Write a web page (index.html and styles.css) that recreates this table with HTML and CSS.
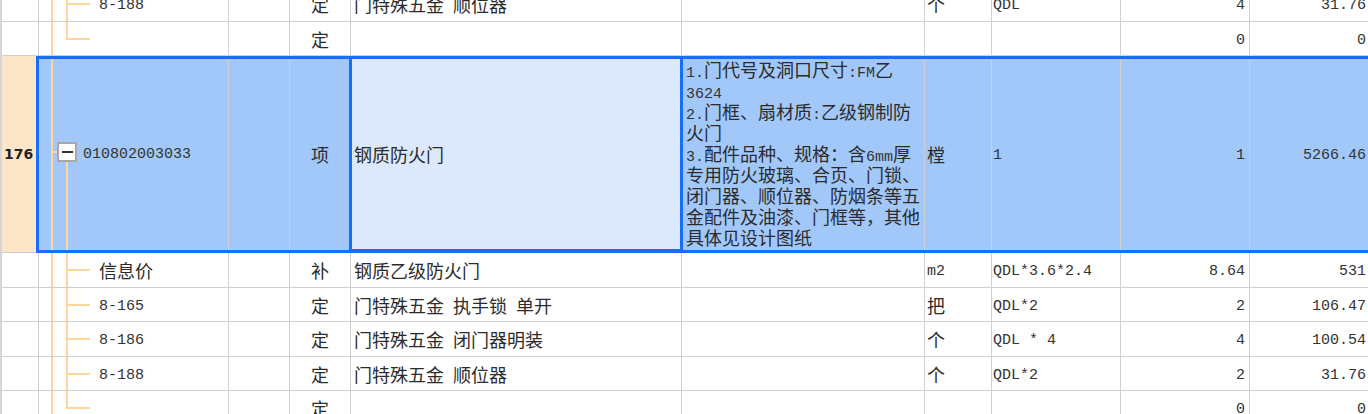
FILE: index.html
```html
<!DOCTYPE html>
<html lang="zh">
<head>
<meta charset="utf-8">
<title>清单</title>
<link rel="stylesheet" href="styles.css">
</head>
<body>
<div class="grid">
  <div class="row r35">
    <div class="c rn"></div>
    <div class="c ca"><span class="guide"></span><span class="elbow"><i class="up"></i><i class="down"></i></span><span class="code m">8-188</span></div>
    <div class="c"></div>
    <div class="c ctr">定</div>
    <div class="c name"><span>门特殊五金<span class="m">&nbsp;</span>顺位器</span></div>
    <div class="c"></div>
    <div class="c unit">个</div>
    <div class="c expr m">QDL</div>
    <div class="c num m">4</div>
    <div class="c num last m">31.76</div>
  </div>
  <div class="row r34">
    <div class="c rn"></div>
    <div class="c ca"><span class="guide"></span><span class="elbow end"><i class="up"></i><i class="down"></i></span></div>
    <div class="c"></div>
    <div class="c ctr">定</div>
    <div class="c name"></div>
    <div class="c"></div>
    <div class="c unit"></div>
    <div class="c expr"></div>
    <div class="c num m">0</div>
    <div class="c num last m">0</div>
  </div>
  <div class="row sel">
    <div class="c rn rnsel">176</div>
    <div class="c ca"><span class="guide"></span><span class="tick"></span><span class="node"><i class="ntop"></i><span class="box"><i class="minus"></i></span><i class="nbot"></i></span><span class="code2 m">010802003033</span></div>
    <div class="c"></div>
    <div class="c ctr">项</div>
    <div class="c name focus">钢质防火门</div>
    <div class="c desc">
      <div class="ln"><span class="m">1.</span>门代号及洞口尺寸<span class="m">:FM</span>乙</div>
      <div class="ln"><span class="m">3624</span></div>
      <div class="ln"><span class="m">2.</span>门框、扇材质<span class="m">:</span>乙级钢制防</div>
      <div class="ln">火门</div>
      <div class="ln"><span class="m">3.</span>配件品种、规格：含<span class="m">6mm</span>厚</div>
      <div class="ln">专用防火玻璃、合页、门锁、</div>
      <div class="ln">闭门器、顺位器、防烟条等五</div>
      <div class="ln">金配件及油漆、门框等，其他</div>
      <div class="ln">具体见设计图纸</div>
    </div>
    <div class="c unit">樘</div>
    <div class="c expr m">1</div>
    <div class="c num m">1</div>
    <div class="c num last m">5266.46</div>
  </div>
  <div class="row r35">
    <div class="c rn"></div>
    <div class="c ca"><span class="guide"></span><span class="elbow"><i class="up"></i><i class="down"></i></span><span class="code">信息价</span></div>
    <div class="c"></div>
    <div class="c ctr">补</div>
    <div class="c name">钢质乙级防火门</div>
    <div class="c"></div>
    <div class="c unit m">m2</div>
    <div class="c expr m">QDL*3.6*2.4</div>
    <div class="c num m">8.64</div>
    <div class="c num last m">531</div>
  </div>
  <div class="row r34">
    <div class="c rn"></div>
    <div class="c ca"><span class="guide"></span><span class="elbow"><i class="up"></i><i class="down"></i></span><span class="code m">8-165</span></div>
    <div class="c"></div>
    <div class="c ctr">定</div>
    <div class="c name"><span>门特殊五金<span class="m">&nbsp;</span>执手锁<span class="m">&nbsp;</span>单开</span></div>
    <div class="c"></div>
    <div class="c unit">把</div>
    <div class="c expr m">QDL*2</div>
    <div class="c num m">2</div>
    <div class="c num last m">106.47</div>
  </div>
  <div class="row r35">
    <div class="c rn"></div>
    <div class="c ca"><span class="guide"></span><span class="elbow"><i class="up"></i><i class="down"></i></span><span class="code m">8-186</span></div>
    <div class="c"></div>
    <div class="c ctr">定</div>
    <div class="c name"><span>门特殊五金<span class="m">&nbsp;</span>闭门器明装</span></div>
    <div class="c"></div>
    <div class="c unit">个</div>
    <div class="c expr m">QDL&nbsp;*&nbsp;4</div>
    <div class="c num m">4</div>
    <div class="c num last m">100.54</div>
  </div>
  <div class="row r34">
    <div class="c rn"></div>
    <div class="c ca"><span class="guide"></span><span class="elbow"><i class="up"></i><i class="down"></i></span><span class="code m">8-188</span></div>
    <div class="c"></div>
    <div class="c ctr">定</div>
    <div class="c name"><span>门特殊五金<span class="m">&nbsp;</span>顺位器</span></div>
    <div class="c"></div>
    <div class="c unit">个</div>
    <div class="c expr m">QDL*2</div>
    <div class="c num m">2</div>
    <div class="c num last m">31.76</div>
  </div>
  <div class="row r35">
    <div class="c rn"></div>
    <div class="c ca"><span class="guide"></span><span class="elbow end"><i class="up"></i><i class="down"></i></span></div>
    <div class="c"></div>
    <div class="c ctr">定</div>
    <div class="c name"></div>
    <div class="c"></div>
    <div class="c unit"></div>
    <div class="c expr"></div>
    <div class="c num m">0</div>
    <div class="c num last m">0</div>
  </div>
</div>
</body>
</html>
```

FILE: styles.css
```css
html, body {
  margin: 0;
  padding: 0;
  background: #ffffff;
}

body {
  overflow: hidden;
  width: 1368px;
  height: 414px;
  font-family: "Noto Sans CJK SC", sans-serif;
  font-size: 18px;
  color: #2b2b2b;
}

.grid {
  margin-top: -13px;
  display: flex;
  flex-direction: column;
}

.row {
  display: grid;
  grid-template-columns: 39px 190px 61px 61px 331px 243px 67px 129px 129px 119px;
  position: relative;
  overflow: visible;
}

.r34 { height: 34px; grid-template-rows: 34px; }
.r35 { height: 35px; grid-template-rows: 35px; }
.sel { height: 197px; grid-template-rows: 197px; }

.c {
  box-sizing: border-box;
  border-right: 1px solid #cfcfcf;
  border-bottom: 1px solid #cfcfcf;
  display: flex;
  align-items: center;
  white-space: nowrap;
  min-width: 0;
  min-height: 0;
}

.m {
  font-family: "Liberation Mono", monospace;
  font-size: 15px;
  color: #333333;
}

.c.m {
  padding-top: 3px;
}

.rn {
  border-left: 2px solid #d6d6d6;
}

.rnsel {
  background: #fde5c7;
  font-family: "DejaVu Sans", sans-serif;
  font-weight: bold;
  font-size: 14px;
  color: #222222;
  padding-left: 2px;
}

.ctr { justify-content: center; }

.name { padding-left: 3px; }

.unit { padding-left: 2px; }

.expr { padding-left: 1px; }

.num {
  justify-content: flex-end;
  padding-right: 4px;
}

.last {
  border-right: none;
  padding-right: 3px;
}

/* tree column */
.ca {
  align-items: stretch;
}

.guide {
  margin-left: 12px;
  width: 2px;
  background: #ffd59c;
  flex: none;
}

.elbow {
  margin-left: 13px;
  width: 24px;
  flex: none;
  display: flex;
  flex-direction: column;
}

.elbow i {
  display: block;
  flex: 1;
  border-left: 2px solid #ffd59c;
}

.elbow .up {
  border-bottom: 2px solid #ffd59c;
}

.elbow.end .down {
  border-left-color: transparent;
}

.code {
  align-self: center;
  margin-left: 9px;
}

.code.m {
  margin-top: 3px;
}

.tick {
  align-self: center;
  width: 4px;
  height: 2px;
  margin-top: -4px;
  background: #ffd59c;
  flex: none;
}

.node {
  width: 20px;
  flex: none;
  display: flex;
  flex-direction: column;
  align-items: center;
}

.ntop {
  display: block;
  height: 86px;
  flex: none;
}

.box {
  box-sizing: border-box;
  width: 20px;
  height: 20px;
  border: 2px solid #a8a8a8;
  background: #ffffff;
  display: flex;
  align-items: center;
  justify-content: center;
  flex: none;
}

.minus {
  display: block;
  width: 11px;
  height: 2px;
  background: #333333;
}

.nbot {
  display: block;
  flex: 1;
  width: 2px;
  background: #ffd59c;
}

.code2 {
  align-self: center;
  margin-left: 6px;
  margin-top: 0;
}

/* description */
.desc {
  display: block;
  padding: 3px 0 0 4px;
  overflow: hidden;
}

.ln {
  height: 21px;
  line-height: 21px;
  overflow: visible;
}

.ln .m {
  line-height: 1;
  vertical-align: baseline;
}

/* selected row */
.sel .c {
  background: #a2c8fa;
}

.sel .rnsel {
  background: #fde5c7;
}

.sel .focus {
  background: #dce9fd;
  position: relative;
}

.sel::after {
  content: "";
  position: absolute;
  left: 36px;
  right: -20px;
  top: 0;
  bottom: 0;
  border: 3px solid #186dfb;
  pointer-events: none;
}

.focus::after {
  content: "";
  position: absolute;
  left: -2px;
  right: -2px;
  top: 0;
  bottom: 0;
  border: 3px solid #186dfb;
  pointer-events: none;
}
```
